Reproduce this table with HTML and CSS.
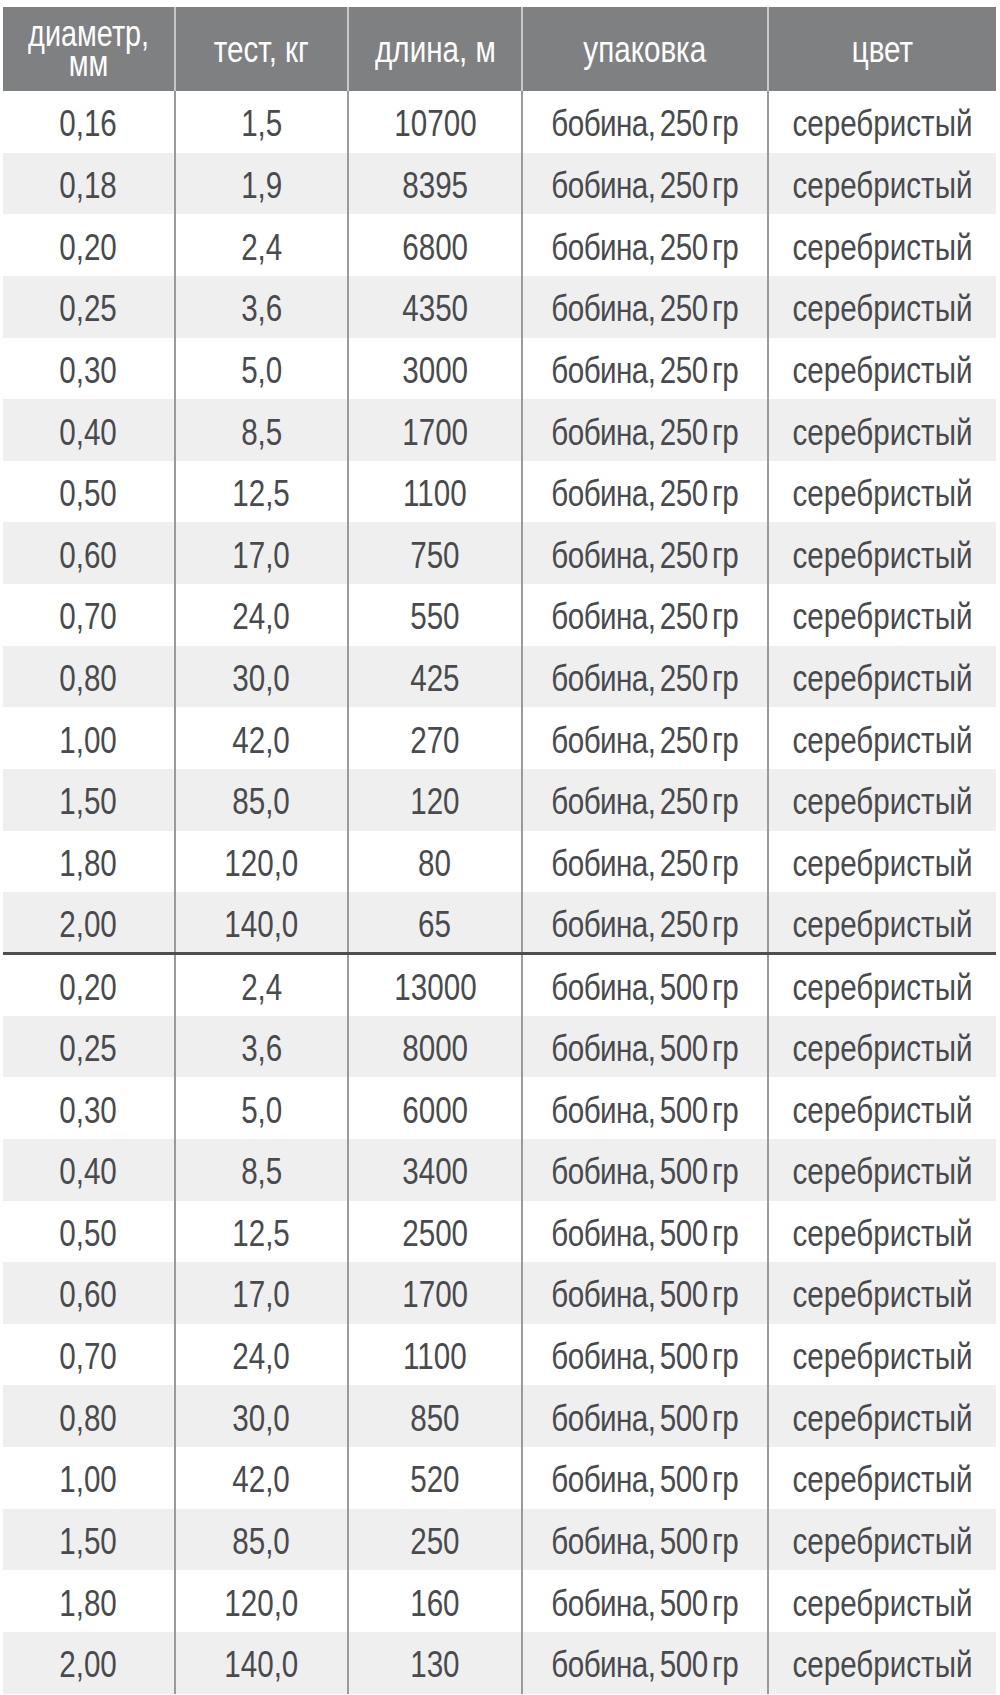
FILE: index.html
```html
<!DOCTYPE html>
<html lang="ru">
<head>
<meta charset="utf-8">
<link rel="stylesheet" href="styles.css">
</head>
<body>
<table class="spec">
  <colgroup>
    <col class="c1"><col class="c2"><col class="c3"><col class="c4"><col class="c5">
  </colgroup>
  <thead>
    <tr>
      <th class="small"><span>диаметр,<br>мм</span></th>
      <th><span>тест, кг</span></th>
      <th><span>длина, м</span></th>
      <th><span>упаковка</span></th>
      <th><span>цвет</span></th>
    </tr>
  </thead>
  <tbody>
    <tr><td><span>0,16</span></td><td><span>1,5</span></td><td><span>10700</span></td><td class="pack"><span>бобина, 250 гр</span></td><td><span>серебристый</span></td></tr>
    <tr><td><span>0,18</span></td><td><span>1,9</span></td><td><span>8395</span></td><td class="pack"><span>бобина, 250 гр</span></td><td><span>серебристый</span></td></tr>
    <tr><td><span>0,20</span></td><td><span>2,4</span></td><td><span>6800</span></td><td class="pack"><span>бобина, 250 гр</span></td><td><span>серебристый</span></td></tr>
    <tr><td><span>0,25</span></td><td><span>3,6</span></td><td><span>4350</span></td><td class="pack"><span>бобина, 250 гр</span></td><td><span>серебристый</span></td></tr>
    <tr><td><span>0,30</span></td><td><span>5,0</span></td><td><span>3000</span></td><td class="pack"><span>бобина, 250 гр</span></td><td><span>серебристый</span></td></tr>
    <tr><td><span>0,40</span></td><td><span>8,5</span></td><td><span>1700</span></td><td class="pack"><span>бобина, 250 гр</span></td><td><span>серебристый</span></td></tr>
    <tr><td><span>0,50</span></td><td><span>12,5</span></td><td><span>1100</span></td><td class="pack"><span>бобина, 250 гр</span></td><td><span>серебристый</span></td></tr>
    <tr><td><span>0,60</span></td><td><span>17,0</span></td><td><span>750</span></td><td class="pack"><span>бобина, 250 гр</span></td><td><span>серебристый</span></td></tr>
    <tr><td><span>0,70</span></td><td><span>24,0</span></td><td><span>550</span></td><td class="pack"><span>бобина, 250 гр</span></td><td><span>серебристый</span></td></tr>
    <tr><td><span>0,80</span></td><td><span>30,0</span></td><td><span>425</span></td><td class="pack"><span>бобина, 250 гр</span></td><td><span>серебристый</span></td></tr>
    <tr><td><span>1,00</span></td><td><span>42,0</span></td><td><span>270</span></td><td class="pack"><span>бобина, 250 гр</span></td><td><span>серебристый</span></td></tr>
    <tr><td><span>1,50</span></td><td><span>85,0</span></td><td><span>120</span></td><td class="pack"><span>бобина, 250 гр</span></td><td><span>серебристый</span></td></tr>
    <tr><td><span>1,80</span></td><td><span>120,0</span></td><td><span>80</span></td><td class="pack"><span>бобина, 250 гр</span></td><td><span>серебристый</span></td></tr>
    <tr><td><span>2,00</span></td><td><span>140,0</span></td><td><span>65</span></td><td class="pack"><span>бобина, 250 гр</span></td><td><span>серебристый</span></td></tr>
  </tbody>
  <tbody class="second">
    <tr><td><span>0,20</span></td><td><span>2,4</span></td><td><span>13000</span></td><td class="pack"><span>бобина, 500 гр</span></td><td><span>серебристый</span></td></tr>
    <tr><td><span>0,25</span></td><td><span>3,6</span></td><td><span>8000</span></td><td class="pack"><span>бобина, 500 гр</span></td><td><span>серебристый</span></td></tr>
    <tr><td><span>0,30</span></td><td><span>5,0</span></td><td><span>6000</span></td><td class="pack"><span>бобина, 500 гр</span></td><td><span>серебристый</span></td></tr>
    <tr><td><span>0,40</span></td><td><span>8,5</span></td><td><span>3400</span></td><td class="pack"><span>бобина, 500 гр</span></td><td><span>серебристый</span></td></tr>
    <tr><td><span>0,50</span></td><td><span>12,5</span></td><td><span>2500</span></td><td class="pack"><span>бобина, 500 гр</span></td><td><span>серебристый</span></td></tr>
    <tr><td><span>0,60</span></td><td><span>17,0</span></td><td><span>1700</span></td><td class="pack"><span>бобина, 500 гр</span></td><td><span>серебристый</span></td></tr>
    <tr><td><span>0,70</span></td><td><span>24,0</span></td><td><span>1100</span></td><td class="pack"><span>бобина, 500 гр</span></td><td><span>серебристый</span></td></tr>
    <tr><td><span>0,80</span></td><td><span>30,0</span></td><td><span>850</span></td><td class="pack"><span>бобина, 500 гр</span></td><td><span>серебристый</span></td></tr>
    <tr><td><span>1,00</span></td><td><span>42,0</span></td><td><span>520</span></td><td class="pack"><span>бобина, 500 гр</span></td><td><span>серебристый</span></td></tr>
    <tr><td><span>1,50</span></td><td><span>85,0</span></td><td><span>250</span></td><td class="pack"><span>бобина, 500 гр</span></td><td><span>серебристый</span></td></tr>
    <tr><td><span>1,80</span></td><td><span>120,0</span></td><td><span>160</span></td><td class="pack"><span>бобина, 500 гр</span></td><td><span>серебристый</span></td></tr>
    <tr><td><span>2,00</span></td><td><span>140,0</span></td><td><span>130</span></td><td class="pack"><span>бобина, 500 гр</span></td><td><span>серебристый</span></td></tr>
  </tbody>
</table>
</body>
</html>
```

FILE: styles.css
```css
html, body {
  margin: 0;
  padding: 0;
  background: #ffffff;
}

body {
  padding: 7px 4px 0 3px;
  font-family: "Liberation Sans", Arial, sans-serif;
}

.spec {
  width: 993px;
  table-layout: fixed;
  border-collapse: collapse;
  border-spacing: 0;
}

.c1 { width: 172px; }
.c2 { width: 173px; }
.c3 { width: 174px; }
.c4 { width: 246px; }
.c5 { width: 228px; }

.spec span {
  display: inline-block;
  transform: scaleX(0.8);
  transform-origin: center center;
  white-space: nowrap;
}

.spec th {
  height: 84px;
  padding: 0;
  background: #7f8082;
  color: #ffffff;
  font-weight: normal;
  font-size: 37px;
  line-height: 1;
  text-align: center;
  vertical-align: middle;
  border-left: 2px solid #c6c7c9;
}

.spec th:first-child {
  border-left: none;
}

.spec th.small {
  font-size: 36px;
  line-height: 30px;
}

.spec td {
  height: 61.65px;
  padding: 4px 0 0 0;
  box-sizing: border-box;
  color: #494a4e;
  font-size: 37px;
  line-height: 1;
  text-align: center;
  vertical-align: middle;
  border-left: 2px solid #9a9a9c;
  white-space: nowrap;
}

.spec td:first-child {
  border-left: none;
}

.spec td.pack span {
  letter-spacing: -0.7px;
  word-spacing: -4px;
}

.spec tbody tr:nth-child(even) td {
  background: #efefef;
}

.spec tbody tr:nth-child(odd) td {
  background: #ffffff;
}

.spec .second tr:first-child td {
  border-top: 3px solid #4e4e50;
}
```
